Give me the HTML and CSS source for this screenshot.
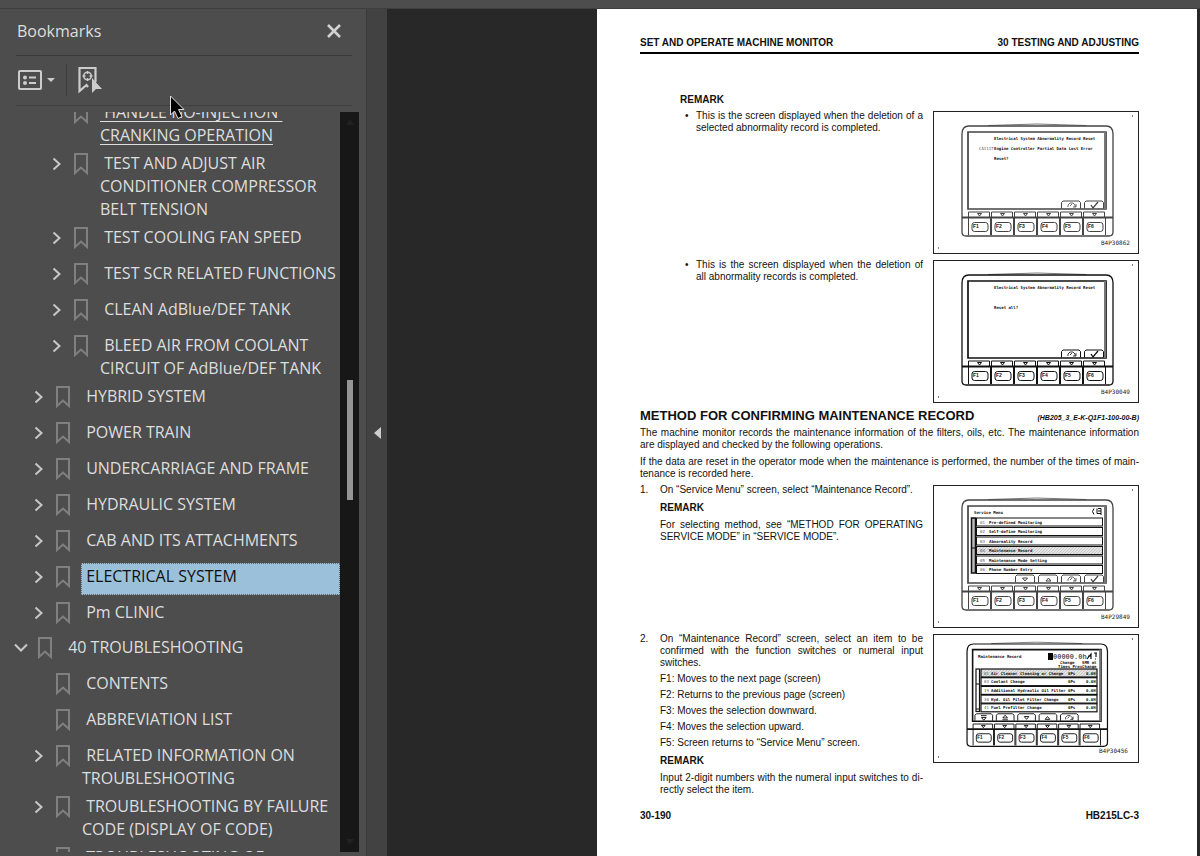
FILE: index.html
```html
<!DOCTYPE html>
<html lang="en">
<head>
<meta charset="utf-8">
<title>Bookmarks</title>
<link rel="stylesheet" href="styles.css">
</head>
<body>
<svg class="sprites" aria-hidden="true">
  <defs>
    <symbol id="mark" viewBox="0 0 16 22"><path d="M2 1h12v19l-6-5.500-6 5.500z"/></symbol>
    <symbol id="right" viewBox="0 0 10 14"><path d="M1.500 1.500l6 5.500-6 5.500"/></symbol>
    <symbol id="down" viewBox="0 0 14 10"><path d="M1 1.500l6 6 6-6"/></symbol>
    <pattern id="hatch" width="3" height="3" patternUnits="userSpaceOnUse"><rect width="3" height="3" fill="#e4e4e4"/><path d="M0 3l3-3" stroke="#aaa" stroke-width=".5"/></pattern>
    <g id="key">
      <path d="M34.500 105v-5h21v5M34.500 106v17M56.500 106v17" />
      <path d="M43.500 101.500h4l-2 2.500z"/>
      <rect x="38" y="110.500" width="16" height="9" rx="2.500"/>
    </g>
    <g id="back"><path d="M2 6v-2l2-2h3l2 2v2M4 5l2-2M7 6h3v-3" stroke-width=".8"/></g>
    <g id="tick"><path d="M0 3l2 3 5-6" stroke-width="1.300"/></g>
    <g id="tab"><path d="M.5 7.500v-6l1.500-1.500h16l1.500 1.500v6"/></g>
    <g id="device" fill="none" stroke="currentColor" stroke-width="1">
      <path d="M54 13.500q49-3 98 0" stroke="#777"/>
      <path d="M28 106v-84q0-8 7-8h137q7 0 7 8v98q0 4-4 4h-143q-4 0-4-4z" stroke-width="1.300"/>
      <path d="M34 97v-77h138v77z" stroke-width="1.700"/>
      <path d="M171 20v77" stroke="#777" stroke-width="2"/>
      <path d="M28 105.500h151" stroke-width="2"/>
      <use href="#key"/><use href="#key" x="23"/><use href="#key" x="46"/><use href="#key" x="69"/><use href="#key" x="92"/><use href="#key" x="115"/>
      <g class="key-text"><text x="39" y="116">F1</text><text x="62" y="116">F2</text><text x="85" y="116">F3</text><text x="108" y="116">F4</text><text x="131" y="116">F5</text><text x="154" y="116">F6</text></g>
    </g>
    <g id="confirm" fill="none" stroke="currentColor">
      <use href="#tab" x="127" y="89"/><use href="#tab" x="150" y="89"/>
      <use href="#back" x="132" y="89"/><use href="#tick" x="157" y="90"/>
    </g>
  </defs>
</svg>

<header class="topbar"></header>
<div class="app">
  <aside class="sidebar">
    <div class="side-head">
      <h1>Bookmarks</h1>
      <button class="icon-btn close" aria-label="Close"><svg width="16" height="16" viewBox="0 0 16 16"><path d="M2 2l12 12M14 2L2 14" stroke="#d2d2d2" stroke-width="2.600"/></svg></button>
    </div>
    <div class="tools">
      <button class="icon-btn options" aria-label="Options">
        <svg width="38" height="22" viewBox="0 0 38 22"><g fill="none" stroke="#ccc" stroke-width="2"><rect x="2" y="2" width="22" height="18" rx="1"/><path d="M12 8.500h7M12 14h7"/></g><circle cx="8" cy="8.500" r="2" fill="#ccc"/><circle cx="8" cy="14" r="2" fill="#ccc"/><path d="M30 9h8l-4 4z" fill="#ccc"/></svg>
      </button>
      <button class="icon-btn find" aria-label="Find current bookmark">
        <svg width="26" height="28" viewBox="0 0 26 28"><g fill="none" stroke="#ccc"><path d="M12 21l-1.500-2-7 6V2h16v14" stroke-width="2.200"/><circle cx="11.500" cy="10" r="3.800" stroke-width="1.500"/><path d="M11.500 5v3M11.500 12v3M6.500 10h3M13.500 10h3" stroke-width="1.300"/></g><path d="M16 12v15l4-4h6z" fill="#ccc"/></svg>
      </button>
    </div>
    <div class="tree-wrap">
      <nav class="tree">
        <ul class="group">
          <li class="row deep current"><span class="toggle"></span><svg class="mark"><use href="#mark"/></svg><a class="label" href="#"> HANDLE NO-INJECTION 
CRANKING OPERATION</a></li>
          <li class="row deep"><button class="toggle" aria-label="Expand"><svg width="10" height="14"><use href="#right"/></svg></button><svg class="mark"><use href="#mark"/></svg><a class="label" href="#"> TEST AND ADJUST AIR
CONDITIONER COMPRESSOR
BELT TENSION</a></li>
          <li class="row deep"><button class="toggle" aria-label="Expand"><svg width="10" height="14"><use href="#right"/></svg></button><svg class="mark"><use href="#mark"/></svg><a class="label" href="#"> TEST COOLING FAN SPEED</a></li>
          <li class="row deep"><button class="toggle" aria-label="Expand"><svg width="10" height="14"><use href="#right"/></svg></button><svg class="mark"><use href="#mark"/></svg><a class="label" href="#"> TEST SCR RELATED FUNCTIONS</a></li>
          <li class="row deep"><button class="toggle" aria-label="Expand"><svg width="10" height="14"><use href="#right"/></svg></button><svg class="mark"><use href="#mark"/></svg><a class="label" href="#"> CLEAN AdBlue/DEF TANK</a></li>
          <li class="row deep"><button class="toggle" aria-label="Expand"><svg width="10" height="14"><use href="#right"/></svg></button><svg class="mark"><use href="#mark"/></svg><a class="label" href="#"> BLEED AIR FROM COOLANT
CIRCUIT OF AdBlue/DEF TANK</a></li>
          <li class="row"><button class="toggle" aria-label="Expand"><svg width="10" height="14"><use href="#right"/></svg></button><svg class="mark"><use href="#mark"/></svg><a class="label" href="#"> HYBRID SYSTEM</a></li>
          <li class="row"><button class="toggle" aria-label="Expand"><svg width="10" height="14"><use href="#right"/></svg></button><svg class="mark"><use href="#mark"/></svg><a class="label" href="#"> POWER TRAIN</a></li>
          <li class="row"><button class="toggle" aria-label="Expand"><svg width="10" height="14"><use href="#right"/></svg></button><svg class="mark"><use href="#mark"/></svg><a class="label" href="#"> UNDERCARRIAGE AND FRAME</a></li>
          <li class="row"><button class="toggle" aria-label="Expand"><svg width="10" height="14"><use href="#right"/></svg></button><svg class="mark"><use href="#mark"/></svg><a class="label" href="#"> HYDRAULIC SYSTEM</a></li>
          <li class="row"><button class="toggle" aria-label="Expand"><svg width="10" height="14"><use href="#right"/></svg></button><svg class="mark"><use href="#mark"/></svg><a class="label" href="#"> CAB AND ITS ATTACHMENTS</a></li>
          <li class="row selected"><button class="toggle" aria-label="Expand"><svg width="10" height="14"><use href="#right"/></svg></button><svg class="mark"><use href="#mark"/></svg><a class="label" href="#"> ELECTRICAL SYSTEM</a></li>
          <li class="row"><button class="toggle" aria-label="Expand"><svg width="10" height="14"><use href="#right"/></svg></button><svg class="mark"><use href="#mark"/></svg><a class="label" href="#"> Pm CLINIC</a></li>
        </ul>
        <ul class="group">
          <li class="row top"><button class="toggle" aria-label="Collapse"><svg width="14" height="10"><use href="#down"/></svg></button><svg class="mark"><use href="#mark"/></svg><a class="label" href="#"> 40 TROUBLESHOOTING</a></li>
          <li class="row"><span class="toggle"></span><svg class="mark"><use href="#mark"/></svg><a class="label" href="#"> CONTENTS</a></li>
          <li class="row"><span class="toggle"></span><svg class="mark"><use href="#mark"/></svg><a class="label" href="#"> ABBREVIATION LIST</a></li>
          <li class="row"><button class="toggle" aria-label="Expand"><svg width="10" height="14"><use href="#right"/></svg></button><svg class="mark"><use href="#mark"/></svg><a class="label" href="#"> RELATED INFORMATION ON
TROUBLESHOOTING</a></li>
          <li class="row"><button class="toggle" aria-label="Expand"><svg width="10" height="14"><use href="#right"/></svg></button><svg class="mark"><use href="#mark"/></svg><a class="label" href="#"> TROUBLESHOOTING BY FAILURE
CODE (DISPLAY OF CODE)</a></li>
          <li class="row"><button class="toggle" aria-label="Expand"><svg width="10" height="14"><use href="#right"/></svg></button><svg class="mark"><use href="#mark"/></svg><a class="label" href="#"> TROUBLESHOOTING OF</a></li>
        </ul>
      </nav>
      <div class="scrollbar">
        <svg width="10" height="8"><path d="M1 7l4-6 4 6z" fill="#222"/></svg>
        <div class="thumb"></div>
        <svg width="10" height="8"><path d="M1 1l4 6 4-6z" fill="#222"/></svg>
      </div>
    </div>
    <svg class="pointer" width="18" height="26" viewBox="0 0 18 26"><path d="M1.500 1v19l4-4 3.500 7.500 4-2-3.500-7h5.500z" fill="#000" stroke="#ddd"/></svg>
  </aside>
  <div class="splitter"><button class="icon-btn" aria-label="Collapse panel"><svg width="8" height="14"><path d="M8 1v12L1 7z" fill="#ccc"/></svg></button></div>

  <main class="viewer">
    <article class="page">
      <header class="page-head"><span>SET AND OPERATE MACHINE MONITOR</span><span>30 TESTING AND ADJUSTING</span></header>

      <h3 class="remark indent">REMARK</h3>
      <section class="split">
        <ul class="bullets"><li>This is the screen displayed when the deletion of a selected abnormality record is completed.</li></ul>
        <svg class="figure soft" viewBox="0 0 204 141">
          <use href="#device"/><use href="#confirm"/>
          <g class="lcd"><text x="60" y="28">Electrical System Abnormality Record Reset</text><text x="45" y="38" class="thin">CA1117</text><text x="60" y="38">Engine Controller Partial Data Lost Error</text><text x="60" y="48">Reset?</text></g>
          <text class="code" x="167" y="133">B4P30862</text><path d="M198 4h1M4 136h1" stroke="#000"/>
        </svg>
      </section>
      <section class="split">
        <ul class="bullets"><li>This is the screen displayed when the deletion of all abnormality records is completed.</li></ul>
        <svg class="figure" viewBox="0 0 204 141">
          <use href="#device"/><use href="#confirm"/>
          <g class="lcd"><text x="60" y="28">Electrical System Abnormality Record Reset</text><text x="60" y="48">Reset all?</text></g>
          <text class="code" x="167" y="133">B4P30049</text><path d="M198 4h1M4 136h1" stroke="#000"/>
        </svg>
      </section>

      <div class="section-head"><h2>METHOD FOR CONFIRMING MAINTENANCE RECORD</h2><span>(HB205_3_E-K-Q1F1-100-00-B)</span></div>
      <p>The machine monitor records the maintenance information of the filters, oils, etc. The maintenance information are displayed and checked by the following operations.</p>
      <p>If the data are reset in the operator mode when the maintenance is performed, the number of the times of main&shy;tenance is recorded here.</p>

      <section class="split step">
        <div class="item"><span>1.</span>
          <div>
            <p>On “Service Menu” screen, select “Maintenance Record”.</p>
            <h3 class="remark">REMARK</h3>
            <p>For selecting method, see “METHOD FOR OPERATING SERVICE MODE” in “SERVICE MODE”.</p>
          </div>
        </div>
        <svg class="figure soft" viewBox="0 0 204 141">
          <g><use href="#device"/><use href="#confirm"/>
            <g fill="none" stroke="currentColor"><use href="#tab" x="81" y="89"/><use href="#tab" x="104" y="89"/><path d="M88.500 92h5l-2.500 3zM112 95h5l-2.500-3z"/></g></g>
          <g fill="none" stroke="#111">
            <rect x="42.500" y="32" width="126" height="8"/><rect x="42.500" y="41.500" width="126" height="8"/><rect x="42.500" y="51" width="126" height="8"/><rect x="42.500" y="60.500" width="126" height="8" fill="url(#hatch)"/><rect x="42.500" y="70" width="126" height="8"/><rect x="42.500" y="79.500" width="126" height="8"/>
            <rect x="37.500" y="32" width="4" height="55" fill="#bbb" stroke-width="1.500"/><path d="M38 62h4"/>
            <path d="M160 22.500q-3 3 0 6M163 22.500v5M163 27.500h4M164 25h3M164 22.500h3v6.500"/>
          </g>
          <g class="lcd"><text x="40" y="28">Service Menu</text></g>
          <g class="lcd"><text x="46" y="38" class="thin">01</text><text x="55" y="38">Pre-defined Monitoring</text><text x="46" y="47" class="thin">02</text><text x="55" y="47">Self-define Monitoring</text><text x="46" y="57" class="thin">03</text><text x="55" y="57">Abnormality Record</text><text x="46" y="66" class="thin">04</text><text x="55" y="66">Maintenance Record</text><text x="46" y="76" class="thin">05</text><text x="55" y="76">Maintenance Mode Setting</text><text x="46" y="85" class="thin">06</text><text x="55" y="85">Phone Number Entry</text></g>
          <text class="code" x="167" y="133">B4P29849</text><path d="M198 4h1M4 136h1" stroke="#000"/>
        </svg>
      </section>

      <section class="split step">
        <div class="item"><span>2.</span>
          <div>
            <p>On “Maintenance Record” screen, select an item to be confirmed with the function switches or numeral input switches.</p>
            <p class="fn">F1: Moves to the next page (screen)</p>
            <p class="fn">F2: Returns to the previous page (screen)</p>
            <p class="fn">F3: Moves the selection downward.</p>
            <p class="fn">F4: Moves the selection upward.</p>
            <p class="fn">F5: Screen returns to “Service Menu” screen.</p>
            <h3 class="remark">REMARK</h3>
            <p>Input 2-digit numbers with the numeral input switches to di&shy;rectly select the item.</p>
          </div>
        </div>
        <svg class="figure" viewBox="0 0 204 127">
          <g transform="translate(7 -4) scale(.93)"><use href="#device"/>
            <g fill="none" stroke="currentColor"><use href="#tab" x="36" y="89"/><use href="#tab" x="59" y="89"/><use href="#tab" x="82" y="89"/><use href="#tab" x="105" y="89"/><use href="#tab" x="128" y="89"/><path d="M43 91h6M43.500 93h5l-2.500 3zM66 95.500h6M66.500 93.500h5l-2.500-3zM89.500 92h5l-2.500 3zM112 95h5l-2.500-3z"/><use href="#back" x="132" y="89"/></g></g>
          <g fill="none" stroke="#111" stroke-width="1.200">
            <rect x="47" y="34" width="116" height="8" fill="url(#hatch)"/><rect x="47" y="42.700" width="116" height="8"/><rect x="47" y="51.400" width="116" height="8"/><rect x="47" y="60.100" width="116" height="8"/><rect x="47" y="68.800" width="116" height="8"/>
            <rect x="42" y="34" width="3.500" height="42.500"/><path d="M42 49h4M42 74h4"/><path d="M153 24l4-5v5M154 21h3M162 18v4M161 24h1M160 18h3"/>
          </g>
          <rect x="114" y="18" width="5" height="7"/>
          <text class="meter" x="119" y="24">00000.0h</text>
          <g class="lcd"><text x="44" y="23">Maintenance Record</text><text x="126" y="29">Change</text><text x="148" y="29">SMR at</text><text x="124" y="33">Times PrevChange</text>
            <text x="50" y="40" class="thin">01</text><text x="57" y="40">Air Cleaner Cleaning or Change</text><text x="134" y="40">0Ps</text><text x="152" y="40">0.0H</text>
            <text x="50" y="48" class="thin">03</text><text x="57" y="48">Coolant Change</text><text x="134" y="48">0Ps</text><text x="152" y="48">0.0H</text>
            <text x="50" y="57" class="thin">19</text><text x="57" y="57">Additional Hydraulic Oil Filter</text><text x="134" y="57">0Ps</text><text x="152" y="57">0.0H</text>
            <text x="50" y="66" class="thin">30</text><text x="57" y="66">Hyd. Oil Pilot Filter Change</text><text x="134" y="66">0Ps</text><text x="152" y="66">0.0H</text>
            <text x="50" y="74" class="thin">41</text><text x="57" y="74">Fuel Prefilter Change</text><text x="134" y="74">0Ps</text><text x="152" y="74">0.0H</text></g>
          <text class="code" x="165" y="118">B4P30456</text><path d="M198 4h1M4 122h1" stroke="#000"/>
        </svg>
      </section>

      <footer class="page-foot"><span>30-190</span><span>HB215LC-3</span></footer>
    </article>
  </main>
</div>
</body>
</html>
```
FILE: styles.css
```css
* { box-sizing: border-box; }
html, body { height: 100%; }
body { margin: 0; display: flex; flex-direction: column; overflow: hidden; background: #282828; }
h1, h2, h3, p, ul { margin: 0; padding: 0; list-style: none; }
.sprites { position: absolute; width: 0; height: 0; }
.topbar { flex: none; height: 9px; background: #4d4d4d; border-bottom: 1px solid #3e3e3e; }
.app { flex: 1; min-height: 0; display: flex; }

.icon-btn, .toggle { border: 0; padding: 0; background: none; display: flex; align-items: center; justify-content: center; }

.sidebar { position: relative; flex: none; width: 366px; display: flex; flex-direction: column; background: #4d4d4d; color: #dedede; font-family: "Open Sans", "Noto Sans", sans-serif; padding-bottom: 4px; }
.side-head { flex: none; height: 47px; margin: 0 14px 0 16px; padding: 0 10px 2px 1px; display: flex; align-items: center; justify-content: space-between; border-bottom: 1px solid #3a3a3a; }
.side-head h1 { font-size: 16px; font-weight: 400; line-height: 22px; }
.tools { flex: none; height: 50px; margin: 0 14px 6px 16px; padding-bottom: 2px; display: flex; align-items: center; border-bottom: 1px solid #3f3f3f; }
.options { height: 32px; width: 51px; padding-left: 1px; justify-content: flex-start; border-right: 1px solid #3c3c3c; }
.find { margin-left: 9px; }
.tree-wrap { flex: 1; min-height: 0; display: flex; margin-right: 7px; }
.tree { flex: 1; min-width: 0; overflow: hidden; }
.group:first-child { margin-top: -13px; }
.group + .group { margin-top: -1px; }
.row { display: flex; align-items: flex-start; min-height: 36px; padding-left: 31px; }
.row.deep { padding-left: 49px; }
.row.top { padding-left: 13px; }
.toggle { flex: none; width: 16px; height: 27px; fill: none; stroke: #c8c8c8; stroke-width: 2; }
.mark { flex: none; width: 16px; height: 22px; margin: 3px 10px 0 8px; fill: none; stroke: #808080; stroke-width: 2; }
.label { flex: 1; padding: 2px 0 3px 1px; color: inherit; text-decoration: none; font-size: 16px; line-height: 23px; white-space: pre; }
.current .label { text-decoration: underline; text-underline-offset: 3px; }
.selected .label { min-height: 32px; background: #9ac0da; color: #111; outline: 1px dotted #666; outline-offset: -1px; }
.scrollbar { flex: none; width: 19px; padding: 6px 0; background: #171717; display: flex; flex-direction: column; align-items: center; }
.thumb { width: 6px; height: 120px; margin: 254px 0 auto; background: #959595; }
.pointer { position: absolute; left: 169px; top: 86px; }

.splitter { flex: none; width: 21px; display: flex; align-items: center; justify-content: center; background: #424242; border-left: 1px solid #3a3a3a; }
.viewer { flex: 1; min-width: 0; padding: 0 3px 0 210px; background: #282828; }
.page { min-height: 100%; padding: 28px 58px 0 43px; background: #fff; color: #111; font: 10px/12px "Liberation Sans", Arial, sans-serif; }
.page-head, .page-foot { display: flex; justify-content: space-between; font-weight: 700; }
.page-head { padding-bottom: 3px; border-bottom: 2px solid #000; }
.page-foot { margin-top: 14px; }
.remark { font-size: 10px; line-height: 12px; }
.remark.indent { margin: 40px 0 4px 40px; }
.page p, .bullets { text-align: justify; }
.split { display: grid; grid-template-columns: 1fr 206px; column-gap: 10px; align-items: start; }
.split + .split { margin-top: 5px; }
.bullets li { position: relative; padding-left: 56px; }
.bullets li::before { content: "•"; position: absolute; left: 45px; }
.figure { display: block; width: 100%; margin-top: 1px; border: 1px solid #222; color: #111; }
.figure.soft { color: #444; }
.section-head { display: flex; justify-content: space-between; align-items: baseline; margin: 5px 0 3px; }
.section-head h2 { font-size: 13px; line-height: 16px; }
.section-head span { font-size: 7px; line-height: 12px; font-weight: 700; font-style: italic; }
.page > p + p { margin-top: 5px; }
p + .step { margin-top: 4px; }
.item { display: flex; }
.item > span { flex: none; width: 20px; }
.item > div { flex: 1; }
.item .remark { margin: 6px 0 5px; }
.item .fn { margin-top: 4px; }

.key-text { font: 700 5px "Liberation Sans", sans-serif; fill: #111; stroke: none; }
.lcd { font: 700 4px "DejaVu Sans Mono", monospace; fill: #111; white-space: pre; }
.lcd .thin { font-weight: 400; fill: #555; }
.meter { font: 700 7px "Liberation Mono", monospace; fill: #555; }
.code { font: 6px "DejaVu Sans Mono", monospace; fill: #222; }
```
